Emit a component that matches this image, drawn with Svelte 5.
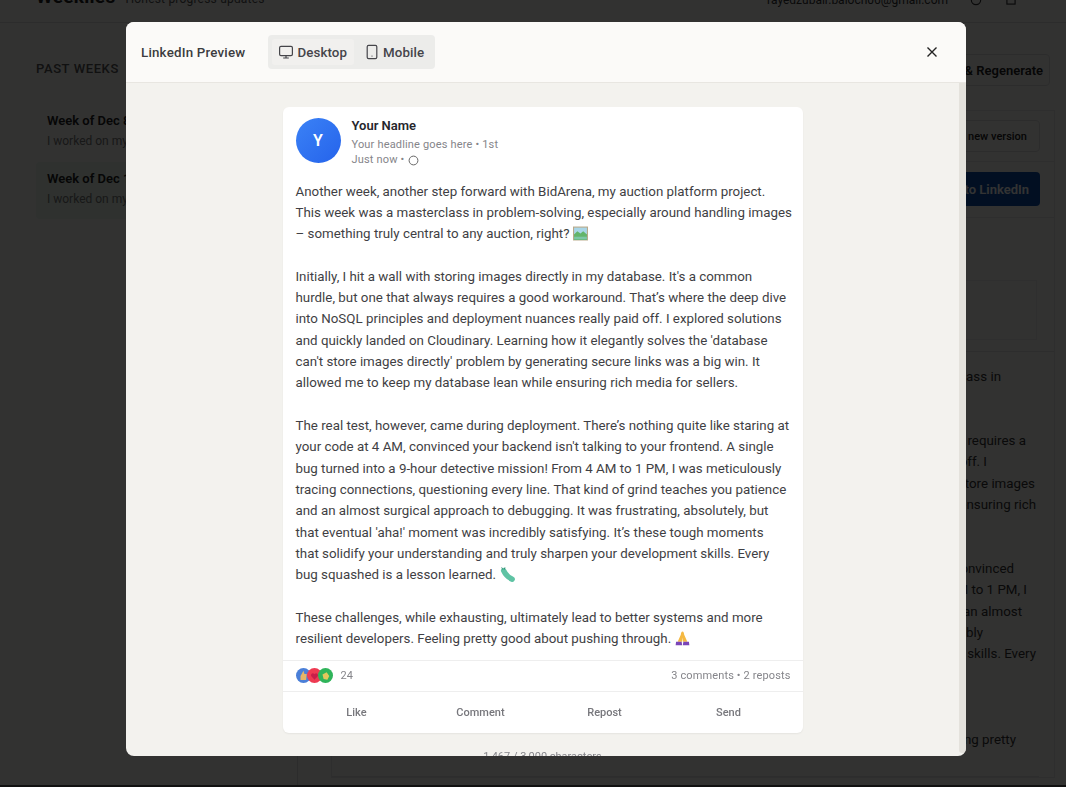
<script>
  const paragraphs = [
    { lines: ['Another week, another step forward with BidArena, my auction platform project.', 'This week was a masterclass in problem-solving, especially around handling images', '– something truly central to any auction, right?'], emoji: 'picture' },
    { lines: ["Initially, I hit a wall with storing images directly in my database. It's a common", 'hurdle, but one that always requires a good workaround. That’s where the deep dive', 'into NoSQL principles and deployment nuances really paid off. I explored solutions', "and quickly landed on Cloudinary. Learning how it elegantly solves the 'database", "can't store images directly' problem by generating secure links was a big win. It", 'allowed me to keep my database lean while ensuring rich media for sellers.'] },
    { lines: ['The real test, however, came during deployment. There’s nothing quite like staring at', "your code at 4 AM, convinced your backend isn't talking to your frontend. A single", 'bug turned into a 9-hour detective mission! From 4 AM to 1 PM, I was meticulously', 'tracing connections, questioning every line. That kind of grind teaches you patience', 'and an almost surgical approach to debugging. It was frustrating, absolutely, but', "that eventual 'aha!' moment was incredibly satisfying. It’s these tough moments", 'that solidify your understanding and truly sharpen your development skills. Every', 'bug squashed is a lesson learned.'], emoji: 'bug' },
    { lines: ['These challenges, while exhausting, ultimately lead to better systems and more', 'resilient developers. Feeling pretty good about pushing through.'], emoji: 'pray' }
  ];
  // Background post, as it reads in the page behind the dialog; `end` is where each line stops.
  const behind = [
    { t: 'This week was a masterclass in', end: 1002 }, { t: '' }, { t: '' },
    { t: 'hurdle, but one that always requires a', end: 1027 }, { t: 'nuances really paid off. I', end: 988 }, { t: 'how it solved the problem to store images', end: 1036 }, { t: 'database lean while ensuring rich', end: 1037 }, { t: '' }, { t: '' },
    { t: 'your code at 4 AM, convinced', end: 1015 }, { t: 'From 4 AM to 1 PM, I', end: 1028 }, { t: 'patience and an almost', end: 1023 }, { t: 'was incredibly', end: 984 }, { t: 'your development skills. Every', end: 1037 }, { t: '' }, { t: '' }, { t: '' },
    { t: 'about pushing pretty', end: 1017 }
  ];
  const actions = ['Like', 'Comment', 'Repost', 'Send'];
</script>

<div class="page">
  <header class="topbar">
    <div class="brand"><strong>Weeklies</strong><span>Honest progress updates</span></div>
    <div class="account">
      <span>rayedzubair.baloch06@gmail.com</span>
      <svg width="14" height="14" viewBox="0 0 24 24" fill="none" stroke="currentColor" stroke-width="2"><circle cx="12" cy="12" r="8"/></svg>
      <svg width="14" height="14" viewBox="0 0 24 24" fill="none" stroke="currentColor" stroke-width="2"><rect x="5" y="5" width="14" height="14"/></svg>
    </div>
  </header>
  <div class="layout">
    <aside class="side">
      <h2>PAST WEEKS</h2>
      <div class="week"><b>Week of Dec 8</b><span>I worked on my auction</span></div>
      <div class="week sel"><b>Week of Dec 1</b><span>I worked on my auction</span></div>
    </aside>
    <main class="main">
      <div class="toolbar"><button class="ghost">Edit &amp; Regenerate</button></div>
      <div class="panel">
        <div class="row"><button class="ghost small">Create new version</button></div>
        <div class="row blue-row"><button class="blue">Post to LinkedIn</button></div>
        <div class="inner-wrap"><div class="inner"></div></div>
        <div class="text">
          {#each behind as l}<div class="bline" style:padding-right={l.end ? `${1040 - l.end}px` : null}>{l.t}</div>{/each}
        </div>
        <div class="divider"></div>
      </div>
    </main>
  </div>
  <div class="pagefoot"></div>
</div>

<div class="overlay">
  <section class="modal">
    <header class="mhead">
      <h1>LinkedIn Preview</h1>
      <div class="seg">
        <button class="tab active">
          <svg width="16" height="16" viewBox="0 0 16 16" fill="none" stroke="currentColor" stroke-width="1.2"><rect x="1.6" y="2.4" width="12.8" height="9.2" rx="1.4"/><path d="M8 11.6v2.2M5.2 14h5.6"/></svg>
          Desktop
        </button>
        <button class="tab">
          <svg width="16" height="16" viewBox="0 0 16 16" fill="none" stroke="currentColor" stroke-width="1.2"><rect x="3.2" y="1.4" width="9.6" height="13.2" rx="1.4"/><path d="M7.6 12.2h.8"/></svg>
          Mobile
        </button>
      </div>
      <button class="close" aria-label="Close">
        <svg width="16" height="16" viewBox="0 0 16 16" fill="none" stroke="currentColor" stroke-width="1.4"><path d="M3.5 3.5l9 9M12.5 3.5l-9 9"/></svg>
      </button>
    </header>
    <div class="mbody">
      <div class="scroll">
        <article class="card">
          <div class="author">
            <div class="avatar">Y</div>
            <div class="who">
              <div class="name">Your Name</div>
              <div class="meta">Your headline goes here • 1st</div>
              <div class="meta time">Just now •
                <svg width="11" height="11" viewBox="0 0 11 11" fill="none" stroke="#666" stroke-width="1"><circle cx="5.5" cy="5.5" r="4.4"/></svg>
              </div>
            </div>
          </div>
          <div class="post">
            {#each paragraphs as p}
              <p>
                {#each p.lines as line, i}
                  <span class="line">{line}{#if i === p.lines.length - 1 && p.emoji === 'picture'}
                    <svg class="emoji" viewBox="0 0 14 14"><rect x="0" y="0.5" width="14" height="13" fill="#b9a98a"/><rect x="1" y="1.5" width="12" height="6" fill="#a9d6e8"/><path d="M1 8l3-3 3 2 2.5-2 3.5 3v5H1z" fill="#63b56b"/><rect x="1" y="10" width="12" height="2.5" fill="#7dc6a8"/></svg>
                  {:else if i === p.lines.length - 1 && p.emoji === 'bug'}
                    <svg class="emoji" viewBox="0 0 14 14"><path d="M3.4 3.4C4.6 6 7.4 9.6 11.4 11.4" stroke="#5fc3a4" stroke-width="5" stroke-linecap="round" fill="none"/><path d="M1.6 0.4l1 2M4.6 0.4L4 2.4" stroke="#2f8a70" stroke-width="0.9"/></svg>
                  {:else if i === p.lines.length - 1 && p.emoji === 'pray'}
                    <svg class="emoji" viewBox="0 0 14 14"><path d="M7 0.5C6 0.5 5.6 2 5.4 3.5L2.5 10h4.1L7 6l.4 4h4.1L8.6 3.5C8.4 2 8 0.5 7 0.5z" fill="#f5b942"/><path d="M1 10h5.2l.5 3.4H.6zM7.8 10H13l.4 3.4H7.3z" fill="#7a45b8"/></svg>
                  {/if}</span>
                {/each}
              </p>
            {/each}
          </div>
          <div class="stats">
            <div class="reacts">
              <span class="bubble b1"><svg viewBox="0 0 8 8"><path d="M2.4 4.2L4 1.4l.5 1.8h1.2L5.4 6.4H2.4z" fill="#e5b567"/></svg></span>
              <span class="bubble b2"><svg viewBox="0 0 8 8"><path d="M4 6.2L2.3 4.4a1 1 0 011.5-1.3l.2.2.2-.2a1 1 0 011.5 1.3z" fill="#c81e4a"/></svg></span>
              <span class="bubble b3"><svg viewBox="0 0 8 8"><path d="M2.4 3.4L4.6 2.2l1.4 2-1 2-2-.4z" fill="#e3c75c"/></svg></span>
              <span class="count">24</span>
            </div>
            <span class="tally">3 comments • 2 reposts</span>
          </div>
          <div class="actions">
            {#each actions as a}<button>{a}</button>{/each}
          </div>
        </article>
        <div class="chars">1,467 / 3,000 characters</div>
      </div>
      <div class="thumb"></div>
    </div>
  </section>
</div>

<style>
  :global(body) { margin: 0; background: #fafaf6; font-family: Roboto, "Open Sans", sans-serif; }
  button { font: inherit; border: 0; background: none; color: inherit; padding: 0; }
  .page { width: 1066px; height: 787px; overflow: hidden; display: flex; flex-direction: column; color: #222; }
  .topbar { height: 23px; flex: none; overflow: hidden; display: flex; justify-content: space-between; align-items: flex-end; padding: 0 48px 15px 36px; border-bottom: 1px solid #ddd; box-sizing: border-box; }
  .brand { display: flex; align-items: baseline; gap: 10px; line-height: 16px; }
  .brand strong { font-size: 19px; letter-spacing: .3px; }
  .brand span { font-size: 12px; color: #555; letter-spacing: .2px; }
  .account { display: flex; gap: 21px; align-items: center; font-size: 12px; color: #333; line-height: 14px; }
  .layout { flex: 1; display: flex; min-height: 0; }
  .side { width: 297px; flex: none; box-sizing: border-box; padding: 38px 0 0 36px; overflow: hidden; }
  .side h2 { margin: 0 0 27px; font-size: 13px; font-weight: 500; letter-spacing: .6px; color: #555; line-height: 16px; }
  .week { width: 230px; padding: 8px 11px 9px; height: 40px; margin-bottom: 1px; display: flex; flex-direction: column; gap: 4px; box-sizing: content-box; }
  .week b { font-size: 13px; font-weight: 600; line-height: 17px; }
  .week span { font-size: 12px; color: #777; line-height: 16px; }
  .sel { background: #e8f5ea; border-radius: 4px; }
  .main { flex: 1; padding: 31px 16px 0 33px; border-left: 1px solid #ddd; min-width: 0; overflow: hidden; }
  .toolbar { display: flex; justify-content: flex-end; height: 32px; margin-bottom: 24px; }
  .ghost { border: 1px solid #ddd; border-radius: 4px; padding: 0 6px; font-size: 13px; font-weight: 600; height: 32px; }
  .panel { border: 1px solid #e4e4e4; margin-right: -5px; }
  .row { display: flex; justify-content: flex-end; padding: 9px 14px; height: 32px; }
  .small { font-size: 11px; font-weight: 500; padding-right: 12px; }
  .blue-row { border-top: 1px solid #e4e4e4; padding: 10px 14px; height: 34px; }
  .blue { background: #0a4ea8; color: #fff; font-weight: 600; font-size: 13px; border-radius: 4px; padding: 0 11px; height: 34px; }
  .inner-wrap { margin-top: 1px; padding: 62px 17px 11px 9px; border-top: 1px solid #e4e4e4; border-bottom: 1px solid #e0e0e0; }
  .inner { height: 58px; border: 1px solid #ececec; }
  .text { padding: 14px 15px 0 0; text-align: right; font-size: 13.33px; line-height: 21.33px; color: #333; }
  .bline { height: 21.33px; white-space: nowrap; }
  .divider { margin: 26px 15px 0 0; border-top: 1px solid #e0e0e0; }
  .pagefoot { height: 2px; background: #555; flex: none; }

  .overlay { position: fixed; inset: 0; background: rgba(0,0,0,.8); display: flex; align-items: flex-start; padding: 22px 0 0 126px; }
  .modal { width: 840px; height: 734px; border-radius: 8px; overflow: hidden; background: #f3f2ee; display: flex; flex-direction: column; }
  .mhead { height: 61px; flex: none; box-sizing: border-box; background: #fbfaf8; border-bottom: 1px solid #e8e6e1; display: flex; align-items: center; padding: 0 24px 0 15px; color: #3c3c40; }
  h1 { margin: 0 23px 0 0; font-size: 13.33px; font-weight: 500; letter-spacing: .2px; }
  .seg { display: flex; gap: 4px; background: #ececea; border-radius: 4px; padding: 4px; height: 34px; box-sizing: border-box; }
  .tab { display: flex; align-items: center; gap: 3px; padding: 0 7px 0 6px; height: 26px; font-size: 13.33px; font-weight: 500; letter-spacing: .1px; border-radius: 3px; color: #45454a; }
  .active { background: #f1f0ee; }
  .close { margin-left: auto; width: 20px; height: 20px; display: flex; align-items: center; justify-content: center; color: #222; }
  .mbody { flex: 1; display: flex; min-height: 0; }
  .scroll { flex: 1; overflow: hidden; padding-top: 24px; display: flex; flex-direction: column; align-items: center; }
  .thumb { width: 7px; flex: none; background: #e4e2dc; margin-bottom: 3px; border-radius: 0 0 3px 3px; }
  .card { width: 520px; flex: none; background: #fff; border-radius: 6px; box-shadow: 0 1px 2px rgba(0,0,0,.06); color: #333; }
  .author { display: flex; gap: 11px; padding: 11px 13px 0; height: 50px; }
  .avatar { width: 45px; height: 45px; border-radius: 50%; background: linear-gradient(135deg, #3b82f6, #2563eb); color: #fff; display: flex; align-items: center; justify-content: center; font-size: 16px; font-weight: 600; }
  .who { display: flex; flex-direction: column; margin-top: -1px; }
  .name { font-size: 13px; font-weight: 600; color: #26262c; line-height: 18px; margin-bottom: 2px; }
  .meta { font-size: 11px; line-height: 16px; color: #85858a; letter-spacing: .17px; }
  .time { display: flex; align-items: center; gap: 4px; margin-top: -1px; }
  .post { padding: 12.5px 13px 0; font-size: 13.33px; line-height: 21.33px; color: #3f3f44; }
  p { margin: 0 0 21.33px; }
  p:last-child { margin: 0; }
  .line { display: block; white-space: nowrap; }
  .emoji { width: 15px; height: 15px; vertical-align: -3px; margin-left: 4px; }
  .stats { margin-top: 10px; height: 32px; box-sizing: border-box; border-top: 1px solid #eee; border-bottom: 1px solid #eee; display: flex; justify-content: space-between; align-items: center; padding: 0 12px 0 13px; font-size: 11px; color: #85858a; }
  .tally { letter-spacing: .13px; }
  .reacts { display: flex; align-items: center; }
  .bubble { width: 15px; height: 15px; border-radius: 50%; margin-right: -4px; display: block; }
  .bubble svg { display: block; width: 15px; height: 15px; }
  .b1 { background: #4a7fd8; } .b2 { background: #ee3a52; } .b3 { background: #2fb45a; }
  .count { margin-left: 12px; }
  .actions { display: grid; grid-template-columns: repeat(4, 1fr); padding: 1px 12px 0; height: 41px; box-sizing: border-box; align-items: center; }
  .actions button { font-size: 11px; font-weight: 500; color: #77777c; text-align: center; }
  .chars { margin-top: 17px; font-size: 11px; line-height: 14px; color: #85858a; flex: none; }
</style>
